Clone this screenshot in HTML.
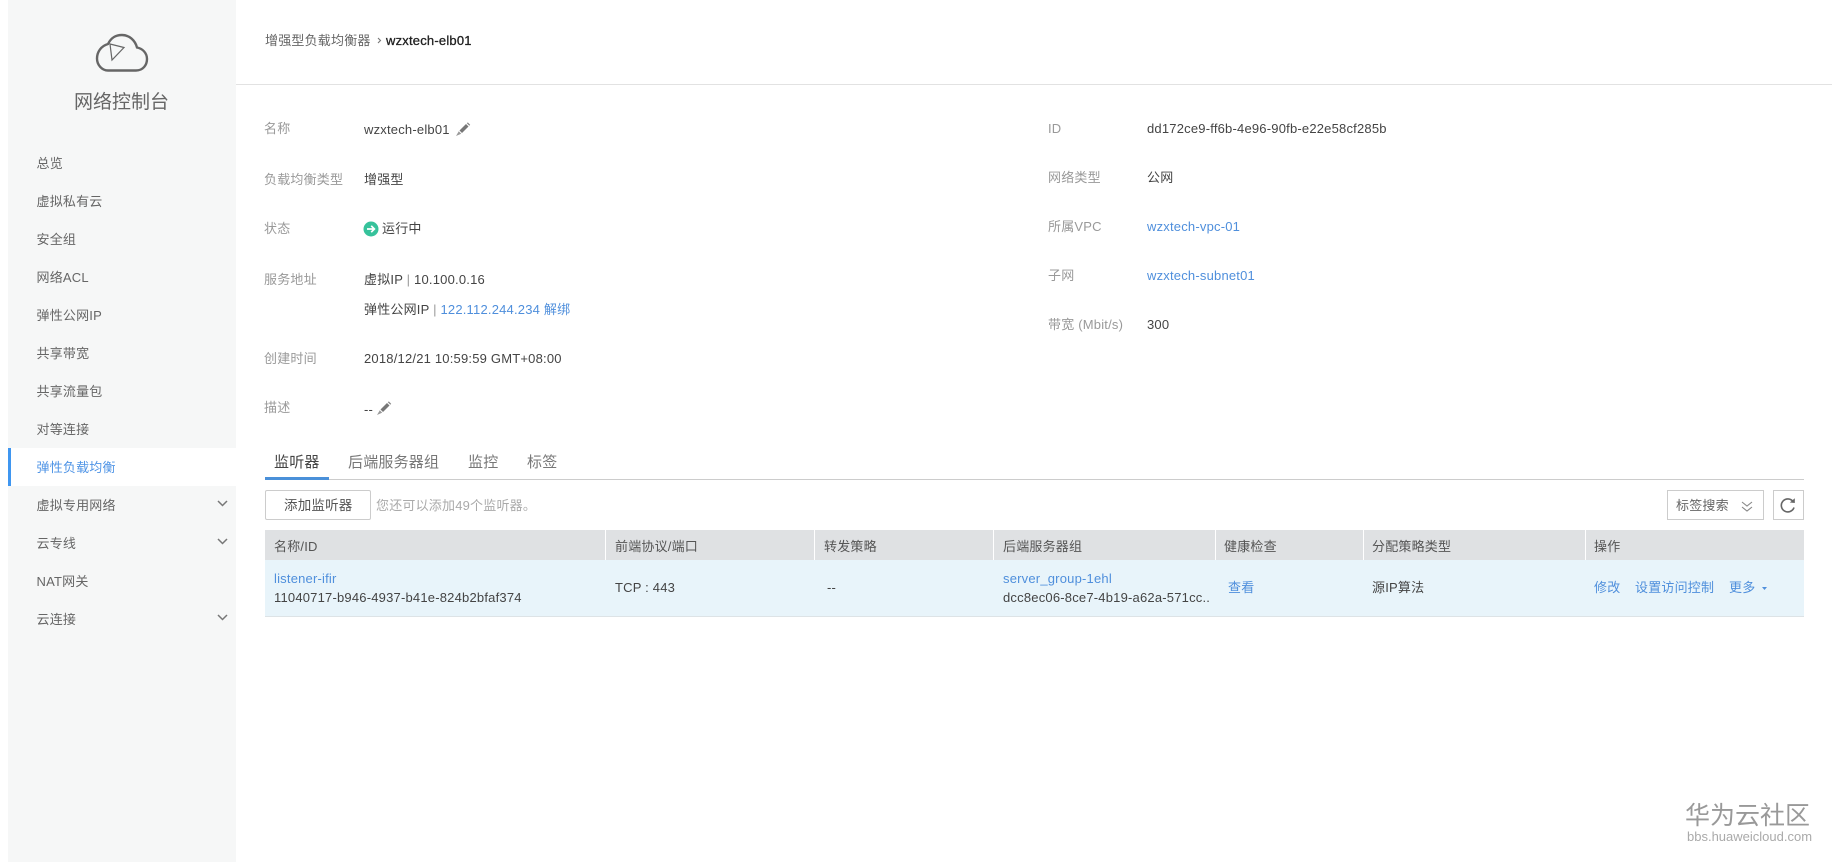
<!DOCTYPE html>
<html lang="zh"><head><meta charset="utf-8"><title>网络控制台</title>
<style>
html,body{margin:0;padding:0;background:#fff}
body{width:1832px;height:862px;position:relative;overflow:hidden;font:13px/20px "Liberation Sans","Noto Sans CJK SC",sans-serif;color:#444;letter-spacing:.2px}
.t{position:absolute;white-space:nowrap;line-height:20px;transform:translateY(1px)}
.box{position:absolute;box-sizing:border-box}
.m{color:#666;left:36.500px}
.l{color:#999}
.a{color:#4f8fdc}
.h{color:#555;top:536px}
svg{position:absolute;overflow:visible}
</style></head><body>
<div class="box" style="left:8px;top:0;width:228px;height:862px;background:#f6f7f7"></div>
<div class="box" style="left:8px;top:448px;width:228px;height:38px;background:#fff"></div>
<div class="box" style="left:8px;top:448px;width:3px;height:38px;background:#3f96f0"></div>
<div class="box" style="left:236px;top:84px;width:1596px;height:1px;background:#e2e2e2"></div>

<svg style="left:0;top:0" width="240" height="90" fill="none" stroke="#666">
<path stroke-width="2.400" d="M108 70.500H136C143 70.500 147 65 147 59C147 53 142.500 48.500 137 47.500C135 40 129 35 122 35C115 35 111 38 108 44C101 46 97 52 97 58.500C97 65 102 70.500 108 70.500Z"/>
<path stroke-width="1.200" d="M110 44L124 47.500L112 60L110 44Z"/>
</svg>
<div class="t" style="left:74px;top:92px;font-size:19px;color:#666;letter-spacing:0">网络控制台</div>

<div class="t m" style="top:153px">总览</div>
<div class="t m" style="top:191px">虚拟私有云</div>
<div class="t m" style="top:229px">安全组</div>
<div class="t m" style="top:267px">网络ACL</div>
<div class="t m" style="top:305px">弹性公网IP</div>
<div class="t m" style="top:343px">共享带宽</div>
<div class="t m" style="top:381px">共享流量包</div>
<div class="t m" style="top:419px">对等连接</div>
<div class="t m" style="top:457px;color:#4f94e6">弹性负载均衡</div>
<div class="t m" style="top:495px">虚拟专用网络</div>
<div class="t m" style="top:533px">云专线</div>
<div class="t m" style="top:571px">NAT网关</div>
<div class="t m" style="top:609px">云连接</div>
<svg style="left:0;top:0" width="240" height="640" fill="none" stroke="#777" stroke-width="1.500">
<path d="M218 501l4.500 4.500l4.500-4.500"/><path d="M218 539l4.500 4.500l4.500-4.500"/><path d="M218 615l4.500 4.500l4.500-4.500"/>
</svg>

<div class="t" style="left:265px;top:30px;color:#666">增强型负载均衡器</div>
<svg style="left:0;top:0" width="400" height="60" fill="none" stroke="#777" stroke-width="1.100"><path d="M378 38l2.500 2.500l-2.500 2.500"/></svg>
<div class="t" style="left:386px;top:30px;color:#222;-webkit-text-stroke:.3px #222">wzxtech-elb01</div>

<div class="t l" style="left:264px;top:118px">名称</div>
<div class="t l" style="left:264px;top:169px">负载均衡类型</div>
<div class="t l" style="left:264px;top:218px">状态</div>
<div class="t l" style="left:264px;top:269px">服务地址</div>
<div class="t l" style="left:264px;top:348px">创建时间</div>
<div class="t l" style="left:264px;top:397px">描述</div>

<div class="t" style="left:364px;top:119px">wzxtech-elb01</div>
<svg style="left:455px;top:122px" width="16" height="15" viewBox="0 0 16 15"><path fill="#777" d="M4.500 8.500L11 2L13.500 4.500L7 11Z"/><path fill="#888" d="M11.800 1.300L12.800 .4L15.200 2.800L14.300 3.800Z"/><path fill="#999" d="M1 14L3.800 9.300L6.200 11.700Z"/></svg>
<div class="t" style="left:364px;top:169px">增强型</div>
<svg style="left:363px;top:221px" width="16" height="16" viewBox="0 0 16 16"><circle cx="8" cy="8" r="7.500" fill="#36c29b"/><path fill="none" stroke="#fff" stroke-width="1.700" d="M4 8H11M8.200 4.800L11.400 8L8.200 11.200"/></svg>
<div class="t" style="left:382px;top:218px">运行中</div>
<div class="t" style="left:364px;top:269px">虚拟IP <span style="color:#999">|</span> 10.100.0.16</div>
<div class="t" style="left:364px;top:299px">弹性公网IP <span style="color:#999">|</span> <span class="a">122.112.244.234 解绑</span></div>
<div class="t" style="left:364px;top:348px">2018/12/21 10:59:59 GMT+08:00</div>
<div class="t" style="left:364px;top:399px">--</div>
<svg style="left:376px;top:401px" width="16" height="15" viewBox="0 0 16 15"><path fill="#777" d="M4.500 8.500L11 2L13.500 4.500L7 11Z"/><path fill="#888" d="M11.800 1.300L12.800 .4L15.200 2.800L14.300 3.800Z"/><path fill="#999" d="M1 14L3.800 9.300L6.200 11.700Z"/></svg>

<div class="t l" style="left:1048px;top:118px">ID</div>
<div class="t l" style="left:1048px;top:167px">网络类型</div>
<div class="t l" style="left:1048px;top:216px">所属VPC</div>
<div class="t l" style="left:1048px;top:265px">子网</div>
<div class="t l" style="left:1048px;top:314px">带宽 (Mbit/s)</div>
<div class="t" style="left:1147px;top:118px">dd172ce9-ff6b-4e96-90fb-e22e58cf285b</div>
<div class="t" style="left:1147px;top:167px">公网</div>
<div class="t a" style="left:1147px;top:216px">wzxtech-vpc-01</div>
<div class="t a" style="left:1147px;top:265px">wzxtech-subnet01</div>
<div class="t" style="left:1147px;top:314px">300</div>

<div class="t" style="left:274px;top:452px;font-size:15px;color:#444">监听器</div>
<div class="t" style="left:348px;top:452px;font-size:15px;color:#777">后端服务器组</div>
<div class="t" style="left:468px;top:452px;font-size:15px;color:#777">监控</div>
<div class="t" style="left:527px;top:452px;font-size:15px;color:#777">标签</div>
<div class="box" style="left:265px;top:479px;width:1539px;height:1px;background:#ccc"></div>
<div class="box" style="left:265px;top:477px;width:64px;height:3px;background:#4a90d9"></div>

<div class="box" style="left:265px;top:490px;width:106px;height:30px;border:1px solid #ccc;border-radius:2px;background:#fff"></div>
<div class="t" style="left:284px;top:495px;color:#555;font-size:13.500px">添加监听器</div>
<div class="t" style="left:376px;top:495px;color:#aaa">您还可以添加49个监听器。</div>

<div class="box" style="left:1667px;top:490px;width:97px;height:30px;border:1px solid #ccc;background:#fff"></div>
<div class="t" style="left:1676px;top:495px;color:#666">标签搜索</div>
<svg style="left:0;top:0" width="1832" height="530" fill="none" stroke="#888" stroke-width="1.100"><path d="M1742 502l5 4l5-4M1742 507l5 4l5-4"/></svg>
<div class="box" style="left:1773px;top:490px;width:31px;height:30px;border:1px solid #ccc;background:#fff"></div>
<svg style="left:1780px;top:497px" width="16" height="16" viewBox="0 0 16 16" fill="none"><path stroke="#666" stroke-width="1.600" d="M13 4.500A6.500 6.500 0 1 0 14 10.500"/><path fill="#666" d="M9.800 5.500L14.800 6L14.800 1.200Z"/></svg>

<div class="box" style="left:265px;top:530px;width:1539px;height:30px;background:#dfe1e3"></div>
<div class="box" style="left:265px;top:560px;width:1539px;height:56px;background:#e8f4fa"></div>
<div class="box" style="left:265px;top:616px;width:1539px;height:1px;background:#dde3e6"></div>
<div class="box" style="left:605px;top:530px;width:1px;height:30px;background:#fff"></div>
<div class="box" style="left:814px;top:530px;width:1px;height:30px;background:#fff"></div>
<div class="box" style="left:993px;top:530px;width:1px;height:30px;background:#fff"></div>
<div class="box" style="left:1215px;top:530px;width:1px;height:30px;background:#fff"></div>
<div class="box" style="left:1363px;top:530px;width:1px;height:30px;background:#fff"></div>
<div class="box" style="left:1585px;top:530px;width:1px;height:30px;background:#fff"></div>

<div class="t h" style="left:274px">名称/ID</div>
<div class="t h" style="left:615px">前端协议/端口</div>
<div class="t h" style="left:824px">转发策略</div>
<div class="t h" style="left:1003px">后端服务器组</div>
<div class="t h" style="left:1224px">健康检查</div>
<div class="t h" style="left:1372px">分配策略类型</div>
<div class="t h" style="left:1594px">操作</div>

<div class="t a" style="left:274px;top:568px">listener-ifir</div>
<div class="t" style="left:274px;top:587px">11040717-b946-4937-b41e-824b2bfaf374</div>
<div class="t" style="left:615px;top:577px">TCP : 443</div>
<div class="t" style="left:827px;top:577px">--</div>
<div class="t a" style="left:1003px;top:568px">server_group-1ehl</div>
<div class="t" style="left:1003px;top:587px">dcc8ec06-8ce7-4b19-a62a-571cc..</div>
<div class="t a" style="left:1228px;top:577px">查看</div>
<div class="t" style="left:1372px;top:577px">源IP算法</div>
<div class="t a" style="left:1594px;top:577px">修改</div>
<div class="t a" style="left:1635px;top:577px">设置访问控制</div>
<div class="t a" style="left:1729px;top:577px">更多</div>
<svg style="left:0;top:0" width="1832" height="600"><path fill="#4f8fdc" d="M1762 587h5l-2.500 3z"/></svg>

<div class="t" style="left:1685px;top:802px;font-size:25px;line-height:26px;color:#999;letter-spacing:0">华为云社区</div>
<div class="t" style="left:1687px;top:826px;font-size:13px;color:#aaa;letter-spacing:0">bbs.huaweicloud.com</div>
</body></html>
